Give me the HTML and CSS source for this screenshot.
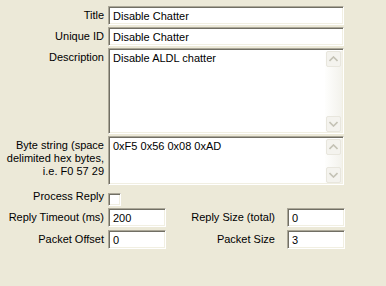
FILE: index.html
```html
<!DOCTYPE html>
<html lang="en">
<head>
    <meta charset="UTF-8">
    <title>Command Properties</title>
    <link rel="stylesheet" href="styles.css">
</head>
<body>
    <div class="form">
        <label class="lbl">Title</label>
        <div class="field">Disable Chatter</div>

        <label class="lbl">Unique ID</label>
        <div class="field">Disable Chatter</div>

        <label class="lbl lbl-top">Description</label>
        <div class="memo memo-desc">
            <div class="memo-text">Disable ALDL chatter</div>
            <div class="vscroll">
                <div class="sbtn"><svg width="9" height="6" viewBox="0 0 9 6"><path d="M0.5 5 L4.5 1 L8.5 5" fill="none" stroke="#c4c2b5" stroke-width="1.6"/></svg></div>
                <div class="strack"></div>
                <div class="sbtn"><svg width="9" height="6" viewBox="0 0 9 6"><path d="M0.5 1 L4.5 5 L8.5 1" fill="none" stroke="#c4c2b5" stroke-width="1.6"/></svg></div>
            </div>
        </div>

        <label class="lbl lbl-top lbl-byte">Byte string (space delimited hex bytes, i.e. F0 57 29</label>
        <div class="memo memo-bytes">
            <div class="memo-text">0xF5 0x56 0x08 0xAD</div>
            <div class="vscroll">
                <div class="sbtn"><svg width="9" height="6" viewBox="0 0 9 6"><path d="M0.5 5 L4.5 1 L8.5 5" fill="none" stroke="#c4c2b5" stroke-width="1.6"/></svg></div>
                <div class="strack"></div>
                <div class="sbtn"><svg width="9" height="6" viewBox="0 0 9 6"><path d="M0.5 1 L4.5 5 L8.5 1" fill="none" stroke="#c4c2b5" stroke-width="1.6"/></svg></div>
            </div>
        </div>

        <label class="lbl">Process Reply</label>
        <div><span class="check"></span></div>
    </div>

    <div class="pairs">
        <label class="lbl">Reply Timeout (ms)</label>
        <div class="field">200</div>
        <label class="lbl lbl-right">Reply Size (total)</label>
        <div class="field">0</div>

        <label class="lbl">Packet Offset</label>
        <div class="field">0</div>
        <label class="lbl lbl-right">Packet Size</label>
        <div class="field">3</div>
    </div>
</body>
</html>
```

FILE: styles.css
```css
body {
    margin: 0;
    background-color: #ece9d8;
    font-family: "Liberation Sans", Arial, sans-serif;
    font-size: 11px;
    color: #000;
}
.form {
    display: grid;
    grid-template-columns: 104px 236px;
    column-gap: 4px;
    row-gap: 2px;
    padding-top: 6px;
}
.lbl {
    text-align: right;
    line-height: 13px;
    align-self: center;
}
.lbl-top {
    align-self: start;
    padding-top: 3px;
}
.lbl-byte {
    padding-left: 4px;
}
.field,
.memo,
.check {
    background: #fff;
    border: 1px solid;
    border-color: #aca899 #fff #fff #aca899;
    box-shadow: inset 1px 1px 0 #716f64, inset -1px -1px 0 #f1efe2;
}
.field {
    height: 19px;
    box-sizing: border-box;
    padding: 0 3px 0 4px;
    line-height: 18px;
    white-space: nowrap;
    overflow: hidden;
}
.memo {
    display: flex;
    box-sizing: border-box;
    padding: 2px 1px 1px 2px;
}
.memo-desc {
    height: 86px;
}
.memo-bytes {
    height: 49px;
}
.memo-text {
    flex: 1;
    padding: 1px 2px;
    line-height: 13px;
}
.vscroll {
    width: 17px;
    display: flex;
    flex-direction: column;
    background: linear-gradient(to right, #fefefd, #f3f2ec);
}
.strack {
    flex: 1;
}
.sbtn {
    height: 16px;
    margin: 0 1px 0 1px;
    box-sizing: border-box;
    border: 1px solid #e8e6dd;
    border-radius: 2px;
    background: #f4f3ee;
    display: flex;
    align-items: center;
    justify-content: center;
}
.check {
    display: block;
    width: 13px;
    height: 13px;
    box-sizing: border-box;
    margin-top: 6px;
}
.pairs {
    display: grid;
    grid-template-columns: 104px 58px 113px 58px;
    column-gap: 4px;
    row-gap: 3px;
    padding-top: 2px;
}
.lbl-right {
    padding-right: 8px;
}
```
